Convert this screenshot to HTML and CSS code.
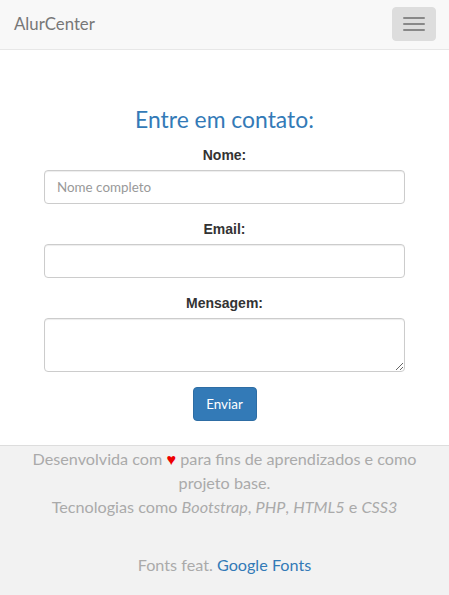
FILE: index.html
```html
<!DOCTYPE html>
<html lang="pt-br">
<head>
<meta charset="utf-8">
<title>AlurCenter - Contato</title>
<link rel="stylesheet" href="styles.css">
</head>
<body>
<nav class="navbar">
  <a class="brand" href="#">AlurCenter</a>
  <button class="toggle" type="button" aria-label="Menu">
    <span class="bar"></span>
    <span class="bar"></span>
    <span class="bar"></span>
  </button>
</nav>
<main class="main">
  <h2 class="title">Entre em contato:</h2>
  <form class="form">
    <div class="group">
      <label class="label" for="nome">Nome:</label>
      <input class="control" id="nome" type="text" placeholder="Nome completo">
    </div>
    <div class="group">
      <label class="label" for="email">Email:</label>
      <input class="control" id="email" type="email">
    </div>
    <div class="group">
      <label class="label" for="msg">Mensagem:</label>
      <textarea class="control area" id="msg"></textarea>
    </div>
    <button class="btn" type="submit">Enviar</button>
  </form>
</main>
<footer class="footer">
  <p class="credits">Desenvolvida com <span class="heart">♥</span> para fins de aprendizados e como projeto base.<br>Tecnologias como <em>Bootstrap</em>, <em>PHP</em>, <em>HTML5</em> e <em>CSS3</em></p>
  <p class="fonts">Fonts feat. <a href="#">Google Fonts</a></p>
</footer>
</body>
</html>
```
FILE: styles.css
```css
* { box-sizing: border-box; }
html, body { margin: 0; padding: 0; }
body {
  font-family: Lato, "Liberation Sans", sans-serif;
  font-size: 14px;
  line-height: 1.42857;
  color: #333;
  background: #fff;
  width: 449px;
  height: 595px;
  overflow: hidden;
}
.navbar {
  height: 50px;
  background: #f8f8f8;
  border-bottom: 1px solid #e7e7e7;
  display: flex;
  align-items: center;
  justify-content: space-between;
  padding: 0 13px 0 14px;
}
.brand {
  font-size: 16.8px;
  color: #777;
  text-decoration: none;
  line-height: 20px;
  margin-top: -2px;
}
.toggle {
  width: 44px;
  height: 34px;
  margin-top: -1px;
  background: #ddd;
  border: 1px solid #ddd;
  border-radius: 4px;
  padding: 0;
  display: flex;
  flex-direction: column;
  align-items: center;
  justify-content: center;
  gap: 4px;
}
.bar {
  display: block;
  width: 22px;
  height: 2px;
  background: #888;
  border-radius: 1px;
}
.main {
  padding: 0 44px;
}
.title {
  margin: 56px 0 0;
  height: 39px;
  text-align: center;
  color: #337ab7;
  font-weight: 400;
  font-size: 22.9px;
  line-height: 26px;
}
.form {
  display: flex;
  flex-direction: column;
  align-items: center;
}
.group {
  width: 100%;
  margin-bottom: 15px;
  display: flex;
  flex-direction: column;
  align-items: center;
}
.label {
  font-family: "Liberation Sans", Arial, sans-serif;
  font-weight: 700;
  font-size: 14px;
  line-height: 20px;
  margin-bottom: 5px;
}
.control {
  width: 100%;
  height: 34px;
  padding: 6px 12px;
  font-family: Lato, "Liberation Sans", sans-serif;
  font-size: 13.4px;
  color: #555;
  background: #fff;
  border: 1px solid #ccc;
  border-radius: 4px;
  box-shadow: inset 0 1px 1px rgba(0,0,0,.075);
}
.control::placeholder { color: #999; }
.area {
  height: 54px;
  resize: vertical;
}
.btn {
  width: 64px;
  height: 34px;
  background: #337ab7;
  border: 1px solid #2e6da4;
  border-radius: 4px;
  color: #fff;
  font-family: Lato, "Liberation Sans", sans-serif;
  font-size: 13.4px;
  padding: 0;
}
.footer {
  margin-top: 24px;
  border-top: 1px solid #ddd;
  background: #f2f2f2;
  height: 150px;
  padding: 0 15px;
  text-align: center;
  color: #aaa;
  font-size: 16.2px;
  line-height: 24px;
}
.credits { margin: 1px 0 0; }
.heart { color: #e00; }
.fonts { margin: 34px 0 0; }
.fonts a { color: #337ab7; text-decoration: none; }
```
